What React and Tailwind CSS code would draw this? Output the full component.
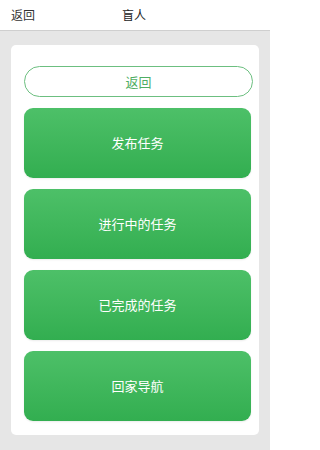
export default function App() {
  const actions = ["发布任务", "进行中的任务", "已完成的任务", "回家导航"];

  return (
    <div
      className="w-[270px] h-[450px] bg-[#e6e6e6] flex flex-col overflow-hidden"
      style={{ fontFamily: '"Noto Sans CJK SC", "Noto Sans", sans-serif' }}
    >
      {/* top bar */}
      <div className="h-[31px] bg-white border-b border-[#cfcfcf] grid grid-cols-[90px_88px_92px] items-center shrink-0">
        <span className="pl-[11px] text-[12px] text-[#333]">返回</span>
        <span className="text-center text-[12px] text-[#222]">盲人</span>
        <span />
      </div>

      <div className="px-[11px] pt-[14px]">
        <div className="bg-white rounded-[5px] pt-[21px] pb-[14px] pl-[13px] pr-[6px] flex flex-col">
          <button className="h-[31px] w-[229px] rounded-full border border-[#6cbf80] text-[#4fae63] text-[13px] flex items-center justify-center">
            返回
          </button>
          <div className="flex flex-col gap-[11px] mt-[11px]">
            {actions.map((label) => (
              <button
                key={label}
                className="h-[70px] w-[227px] rounded-[9px] bg-gradient-to-b from-[#4dc068] to-[#32ae50] text-white text-[13px] flex items-center justify-center shadow-[0_1px_2px_rgba(0,0,0,0.08)]"
              >
                {label}
              </button>
            ))}
          </div>
        </div>
      </div>
    </div>
  );
}
